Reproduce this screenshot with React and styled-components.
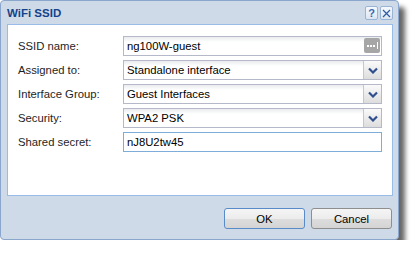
import React from 'react';
import styled, { createGlobalStyle } from 'styled-components';

const GlobalStyle = createGlobalStyle`
  body {
    margin: 0;
    background: #ffffff;
    font-family: "Liberation Sans", Arial, sans-serif;
  }
`;

const Window = styled.div`
  width: 397px;
  height: 238px;
  border: 1px solid #8aa6cc;
  border-radius: 4px;
  background: #cedae8;
  box-shadow: 6px 7px 5px rgba(0, 0, 0, 0.6);
  display: flex;
  flex-direction: column;
`;

const Header = styled.div`
  height: 23px;
  display: flex;
  align-items: center;
  justify-content: space-between;
  padding: 0 5px 0 6px;
`;

const Title = styled.div`
  font-weight: bold;
  font-size: 11.5px;
  color: #15428b;
  margin-top: 1px;
`;

const Tools = styled.div`
  display: flex;
  gap: 2px;
  margin-top: 1px;
`;

const Tool = styled.div`
  width: 11px;
  height: 12px;
  border: 1px solid #9ab4d6;
  border-radius: 2px;
  background: linear-gradient(#f6f9fd, #dbe6f3);
  display: flex;
  align-items: center;
  justify-content: center;
  color: #3a68b0;
  font-size: 11px;
  font-weight: bold;
  line-height: 1;
`;

const Body = styled.div`
  margin: 0 5px 0 6px;
  height: 172px;
  background: #ffffff;
  border: 1px solid #99bbe8;
  padding: 11px 0 0 10px;
  box-sizing: border-box;
  display: flex;
  flex-direction: column;
  gap: 4px;
`;

const Row = styled.div`
  display: grid;
  grid-template-columns: 105px 259px;
  align-items: center;
  height: 20px;
`;

const Label = styled.label`
  font-size: 11.3px;
  color: #1e1e1e;
`;

const Field = styled.div`
  height: 20px;
  box-sizing: border-box;
  border: 1px solid ${(p) => (p.$focused ? '#7eadd9' : '#b5b8c8')};
  background: ${(p) => (p.$focused ? '#ffffff' : 'linear-gradient(#e9ebee 0px, #ffffff 5px, #ffffff)')};
  display: flex;
  align-items: stretch;
`;

const Value = styled.div`
  flex: 1;
  display: flex;
  align-items: center;
  padding-left: 3px;
  font-size: 11.3px;
  color: #000000;
`;

const Trigger = styled.div`
  width: 17px;
  border-left: 1px solid #c4c7d2;
  background: linear-gradient(#fafafa, #dddddd);
  display: flex;
  align-items: center;
  justify-content: center;
`;

const Ellipsis = styled.div`
  width: 16px;
  height: 15px;
  margin: 1px 1px 1px 0;
  background: #a6a6a6;
  border-radius: 2px;
  display: flex;
  align-items: center;
  justify-content: center;
  gap: 1px;
  span {
    width: 2px;
    height: 2px;
    background: #ffffff;
  }
  span:last-child {
    height: 7px;
    width: 1px;
    margin-left: 1px;
  }
`;

const Footer = styled.div`
  flex: 1;
  display: flex;
  justify-content: flex-end;
  align-items: flex-start;
  gap: 6px;
  padding: 12px 6px 0 0;
`;

const Button = styled.button`
  width: 81px;
  height: 21px;
  border-radius: 3px;
  border: 1px solid ${(p) => (p.$primary ? '#5a8bc9' : '#8e8e8e')};
  background: linear-gradient(#f5f5f5 0%, #ececec 50%, #dddddd 52%, #d4d4d4 100%);
  font-family: "Liberation Sans", Arial, sans-serif;
  font-size: 11.3px;
  color: #000000;
  padding: 0;
`;

const Chevron = () => (
  <svg width="10" height="7" viewBox="0 0 10 7">
    <path d="M1 1.5 L5 5.5 L9 1.5" fill="none" stroke="#2f4f8f" strokeWidth="2.2" />
  </svg>
);

const CloseIcon = () => (
  <svg width="9" height="9" viewBox="0 0 9 9">
    <path d="M1 1 L8 8 M8 1 L1 8" stroke="#2d5aa0" strokeWidth="1.2" />
  </svg>
);

const fields = [
  { label: 'SSID name:', value: 'ng100W-guest', kind: 'ellipsis' },
  { label: 'Assigned to:', value: 'Standalone interface', kind: 'combo' },
  { label: 'Interface Group:', value: 'Guest Interfaces', kind: 'combo' },
  { label: 'Security:', value: 'WPA2 PSK', kind: 'combo' },
  { label: 'Shared secret:', value: 'nJ8U2tw45', kind: 'focus' },
];

export default function App() {
  return (
    <>
      <GlobalStyle />
      <Window>
        <Header>
          <Title>WiFi SSID</Title>
          <Tools>
            <Tool>?</Tool>
            <Tool>
              <CloseIcon />
            </Tool>
          </Tools>
        </Header>
        <Body>
          {fields.map((f) => (
            <Row key={f.label}>
              <Label>{f.label}</Label>
              <Field $focused={f.kind === 'focus'}>
                <Value>{f.value}</Value>
                {f.kind === 'combo' && (
                  <Trigger>
                    <Chevron />
                  </Trigger>
                )}
                {f.kind === 'ellipsis' && (
                  <Ellipsis>
                    <span />
                    <span />
                    <span />
                    <span />
                  </Ellipsis>
                )}
              </Field>
            </Row>
          ))}
        </Body>
        <Footer>
          <Button $primary>OK</Button>
          <Button>Cancel</Button>
        </Footer>
      </Window>
    </>
  );
}
